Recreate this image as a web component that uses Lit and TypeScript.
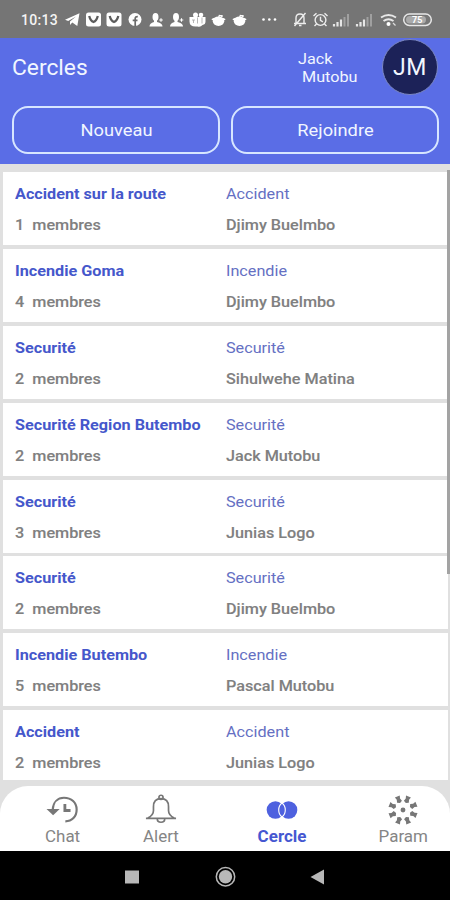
import { LitElement, html, svg, css } from "lit";
import { customElement } from "lit/decorators.js";
import { classMap } from "lit/directives/class-map.js";

interface Circle { name: string; members: number; kind: string; owner: string; }

const circles: Circle[] = [
  { name: "Accident sur la route", members: 1, kind: "Accident", owner: "Djimy Buelmbo" },
  { name: "Incendie Goma", members: 4, kind: "Incendie", owner: "Djimy Buelmbo" },
  { name: "Securité", members: 2, kind: "Securité", owner: "Sihulwehe Matina" },
  { name: "Securité Region Butembo", members: 2, kind: "Securité", owner: "Jack Mutobu" },
  { name: "Securité", members: 3, kind: "Securité", owner: "Junias Logo" },
  { name: "Securité", members: 2, kind: "Securité", owner: "Djimy Buelmbo" },
  { name: "Incendie Butembo", members: 5, kind: "Incendie", owner: "Pascal Mutobu" },
  { name: "Accident", members: 2, kind: "Accident", owner: "Junias Logo" },
];

@customElement("status-bar")
class StatusBar extends LitElement {
  static styles = css`
    :host { display: block; height: 38px; background: #757575; color: #f4f4f4; }
    .bar { display: flex; align-items: center; height: 38px; padding: 2px 17px 0 21px; box-sizing: border-box; }
    .time { font: 500 14px/20px Roboto, sans-serif; letter-spacing: 0.3px; width: 44px; }
    .icons { display: block; width: 368px; height: 20px; }
    .level { font: 700 9px Roboto, sans-serif; }
  `;
  render() {
    const vBadge = (x: number) => svg`
      <rect x=${x} y="2.5" width="15" height="14" rx="2.5" fill="#fff"/>
      <path d="M${x + 3.2} 6 q1.300 5 4.300 6 q3-1 4.300-6" fill="none" stroke="#5c5c5c" stroke-width="2.300"/>`;
    const person = (x: number) => svg`
      <ellipse cx=${x + 6} cy="7" rx="3" ry="4"/>
      <path d="M${x + 4.5} 9h3v3q5.500 1 5.500 4.500h-13q0-3.500 4.500-4.500z"/>
      <path d="M${x + 9.7} 10h3.600M${x + 11.5} 8.200v3.600" stroke="#fff" stroke-width="1.100"/>`;
    const bowl = (x: number) => svg`
      <ellipse cx=${x + 7} cy="11.300" rx="5.700" ry="4.700"/>
      <ellipse cx=${x + 7} cy="9.300" rx="7" ry="2"/>
      <path d="M${x + 7} 8l.8-2.600 2.200 .4" fill="none" stroke="#fff" stroke-width="1.200"/>
      <circle cx=${x + 10.3} cy="6" r="1.100"/>`;
    const signal = (x: number) => svg`
      <path d="M${x + 1} 14v2.500M${x + 4.500} 12v4.500M${x + 8} 9.500v7" stroke="#e6e6e6" stroke-width="2.200"/>
      <path d="M${x + 11.500} 7v9.500M${x + 15} 4v12.500" stroke="#a0a0a0" stroke-width="2"/>`;
    return html`<div class="bar"><span class="time">10:13</span>
      <svg class="icons" viewBox="65 0 368 20" fill="#fff">
        <path d="M65 9.800 79.500 3.300 77.300 16 72.300 12.400 70 15v-3.500l6-5-7.800 4.600z"/>
        ${vBadge(86)}${vBadge(106.5)}
        <circle cx="135" cy="9.500" r="6.500"/>
        <path d="M135.200 16.500v-8q0-2 2.600-1.800M132.700 10.300h4.800" fill="none" stroke="#6b6b6b" stroke-width="1.700"/>
        ${person(149.5)}${person(170)}
        <circle cx="195.500" cy="5" r="2.500"/><circle cx="201" cy="5" r="2.300"/>
        <path d="M189.500 7h16v4.500q0 3-3 3.500-2 2.500-5 1.500h-2q-6 0-6-5z"/>
        <path d="M192 10h3m-1.500 0v3M197.500 7.500v6m4.500-6v6" fill="none" stroke="#a5a5a5" stroke-width=".8"/>
        ${bowl(211.5)}${bowl(232.5)}
        <circle cx="263.500" cy="9.500" r="1.300"/><circle cx="269.300" cy="9.500" r="1.300"/><circle cx="275" cy="9.500" r="1.300"/>
        <g fill="none" stroke="#eee" stroke-width="1.400">
          <path d="M294 13.500h12M296 13V8q0-4 4-4t4 4v5M305.500 3 294.500 16M299 15.500h2.500"/>
          <circle cx="320.500" cy="10" r="5.400"/><path d="M320.500 6.800v3.500l2.400 1.500M313.500 6l3-2.800M327.500 6l-3-2.800M316.500 14l-2 2M324.500 14l2 2"/>
        </g>
        ${signal(333)}${signal(356)}
        <g fill="none" stroke="#e7e7e7" stroke-width="1.900"><path d="M381 7.500q7.500-5 15 0M383.500 11q5-3.500 10 0"/></g>
        <circle cx="388.500" cy="14" r="2"/><path d="M393 13l2.500 2.500" stroke="#ddd" stroke-width="1.200"/>
        <rect x="403.700" y="4" width="27.600" height="11.500" rx="5.700" fill="#777" stroke="#e8e8e8" stroke-width="1.500"/>
        <rect x="406" y="6" width="20" height="7.500" rx="3.700" fill="#aaa"/>
        <text class="level" x="412" y="13">75</text>
      </svg></div>`;
  }
}

@customElement("circles-header")
class CirclesHeader extends LitElement {
  static styles = css`
    :host { display: block; height: 126px; background: #5a6de6; color: #f1f6ff; font-family: Roboto, sans-serif; }
    .top { display: flex; height: 60px; padding: 0 12px 0 12px; }
    h1 { margin: 0; flex: 1; font-size: 22px; line-height: 60px; font-weight: 400; transform: scaleX(1.035); transform-origin: left; }
    .user { width: 84px; padding-top: 12px; font-size: 15px; line-height: 18px; white-space: pre; transform: scaleX(1.08); transform-origin: left; }
    .avatar { width: 56px; height: 56px; margin-top: 1px; box-sizing: border-box; border: 1px solid #7b87c4; border-radius: 50%; background: #1c2258; text-align: center; font-size: 23px; line-height: 56px; letter-spacing: 0.5px; }
    .actions { display: grid; grid-template-columns: 1fr 1fr; gap: 11px; padding: 8px 11px 0 12px; }
    button { height: 48px; border: 2px solid #d7e6ff; border-radius: 16px; background: none; padding: 0; color: inherit; font: 400 17px Roboto, sans-serif; }
    .text { display: inline-block; transform: scaleX(1.075); }
  `;
  render() {
    return html`
      <div class="top"><h1>Cercles</h1><div class="user">Jack
 Mutobu</div><div class="avatar">JM</div></div>
      <div class="actions"><button><span class="text">Nouveau</span></button><button><span class="text">Rejoindre</span></button></div>`;
  }
}

@customElement("circle-list")
class CircleList extends LitElement {
  static styles = css`
    :host { display: block; height: 616px; position: relative; overflow: hidden; background: #e0e0e0; font: 700 15px/20px Roboto, sans-serif; }
    .list { display: grid; grid-auto-rows: 73px; gap: 3.9px; padding: 8px 2px 0 3px; }
    .card { display: grid; grid-template-columns: 211px 1fr; grid-template-rows: 20px 20px; row-gap: 11px; padding: 12px 0 0 12px; background: #fff; white-space: pre; }
    .card span { transform: scaleX(1.08); transform-origin: left; }
    .name { color: #4557cb; }
    .kind { color: #6570c3; font-weight: 400; }
    .sub { color: #808080; font-weight: 500; -webkit-text-stroke: 0.1px #808080; }
    .scroll { position: absolute; right: 0; top: 6px; width: 3.5px; height: 404px; background: #a3a3a3; }
  `;
  render() {
    return html`<div class="list">${circles.map((c) => html`
      <div class="card"><span class="name">${c.name}</span><span class="kind">${c.kind}</span>
        <span class="sub">${c.members}  membres</span><span class="sub">${c.owner}</span></div>`)}
      </div><div class="scroll"></div>`;
  }
}

const tabs = [
  { label: "Chat", icon: svg`<g transform="translate(1.500 0.500)"><g fill="none" stroke="#777" stroke-width="2.300"><path d="M6.500 16.500C7 8 12 3.500 18.500 3.500c8 0 13.500 5 13.500 12.500s-5 12.500-12 12.500"/><path d="M19.500 10v7h6" stroke-width="3"/></g><path d="M0 15.500h14L7 22z" fill="#777"/></g>` },
  { label: "Alert", icon: svg`<g fill="none" stroke="#777" stroke-width="1.800"><path d="M3 26h32M5 25.500q6-3 6-8v-4Q11 5 19 5t8 8.500v4q0 5 6 8"/><path d="M15 26q0 4 4 4t4-4"/><circle cx="19" cy="3.500" r="2.200"/></g>` },
  { label: "Cercle", icon: svg`<circle cx="12" cy="17" r="9.300" fill="#4e61df"/><circle cx="26" cy="17" r="9.300" fill="#4e61df"/><g fill="none" stroke="#fff" stroke-width="1.200"><path d="M19 9.500q-3.500 2.500-3.500 7.500t3.500 7.500M19 9.500q3.500 2.500 3.500 7.500t-3.500 7.500"/></g>` },
  { label: "Param", icon: svg`<circle cx="19" cy="17" r="2.600" fill="#777"/>${[22, 67, 112, 157, 202, 247, 292, 337].map((a) => svg`<path transform="rotate(${a} 19 17)" d="M16.200 1.500h5.600l-.9 3 .9 3-2.800 1.500-2.800-1.500 .9-3z" fill="#777"/>`)}` },
];

@customElement("tab-bar")
class TabBar extends LitElement {
  static styles = css`
    :host { display: block; height: 71px; background: #e0e0e0; font: 400 16px/20px Roboto, sans-serif; }
    .gap { height: 6px; }
    .bar { display: grid; grid-template-columns: 102px 94px 148px 94px; padding-left: 12px; height: 65px; border-radius: 28px 28px 0 0; background: #fff; }
    .tab { display: flex; flex-direction: column; align-items: center; padding-top: 8px; color: #858585; }
    .tab span { margin-top: 1px; transform: scaleX(1.06); }
    .icon { display: block; width: 36px; height: 32px; }
    .active { color: #4557d1; font-weight: 700; }
  `;
  render() {
    return html`<div class="gap"></div><div class="bar">${tabs.map((t) => html`
      <div class=${classMap({ tab: true, active: t.label === "Cercle" })}>
        <svg class="icon" viewBox="0 0 38 34">${t.icon}</svg><span>${t.label}</span></div>`)}</div>`;
  }
}

@customElement("app-root")
class AppRoot extends LitElement {
  static styles = css`
    :host { display: block; width: 450px; height: 900px; overflow: hidden; background: #000; }
    .nav { display: block; width: 450px; height: 49px; }
  `;
  render() {
    return html`<status-bar></status-bar><circles-header></circles-header><circle-list></circle-list><tab-bar></tab-bar>
      <svg class="nav" viewBox="0 0 450 49" fill="#b8b8b8">
        <rect x="125" y="19.500" width="14" height="13"/>
        <circle cx="225.500" cy="25.800" r="6.700"/><circle cx="225.500" cy="25.800" r="9.200" fill="none" stroke="#b8b8b8" stroke-width="1.500"/>
        <path d="M310.500 26 324 18.500v15z"/>
      </svg>`;
  }
}
